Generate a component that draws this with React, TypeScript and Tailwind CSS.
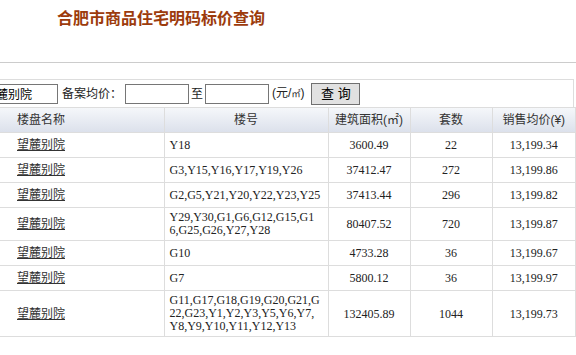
const rows = [
  { no: "Y18", area: "3600.49", sets: "22", price: "13,199.34" },
  { no: "G3,Y15,Y16,Y17,Y19,Y26", area: "37412.47", sets: "272", price: "13,199.86" },
  { no: "G2,G5,Y21,Y20,Y22,Y23,Y25", area: "37413.44", sets: "296", price: "13,199.82" },
  { no: "Y29,Y30,G1,G6,G12,G15,G16,G25,G26,Y27,Y28", area: "80407.52", sets: "720", price: "13,199.87" },
  { no: "G10", area: "4733.28", sets: "36", price: "13,199.67" },
  { no: "G7", area: "5800.12", sets: "36", price: "13,199.97" },
  {
    no: "G11,G17,G18,G19,G20,G21,G22,G23,Y1,Y2,Y3,Y5,Y6,Y7,Y8,Y9,Y10,Y11,Y12,Y13",
    area: "132405.89",
    sets: "1044",
    price: "13,199.73",
  },
];

const cjk = "font-['Liberation_Sans','Noto_Sans_CJK_SC',sans-serif]";
const serif = "font-['Liberation_Serif','Noto_Sans_CJK_SC',serif]";

export default function App() {
  return (
    <div className={`w-[576px] h-[355px] overflow-hidden bg-white ${cjk}`}>
      <h1 className="h-[62px] pl-[57px] pt-[10px] text-[16px] font-bold leading-[18px] text-[#9c3b0c]">
        合肥市商品住宅明码标价查询
      </h1>
      <div className="h-[17px] border-t border-[#cccccc]" />

      <div className="flex h-[28px] w-[574px] items-center border-t border-r border-[#dddddd] text-[12px] text-[#222]">
        <input
          readOnly
          value="望麓别院"
          className="-ml-[19px] h-[20px] w-[77px] border border-[#767676] px-[2px] text-[12px] text-black outline-none"
        />
        <span className="ml-[4px] leading-[14px]">备案均价：</span>
        <input
          readOnly
          className="ml-[3px] h-[20px] w-[64px] border border-[#767676] outline-none"
        />
        <span className="mx-[2px] leading-[14px]">至</span>
        <input
          readOnly
          className="h-[20px] w-[64px] border border-[#767676] outline-none"
        />
        <span className="ml-[3px] leading-[14px]">
          (元/<span className="text-[9px]">㎡</span>)
        </span>
        <button className="ml-[7px] h-[22px] w-[49px] border border-[#707070] bg-[#e1e1e1] text-[13px] leading-[14px] text-black">
          查 询
        </button>
      </div>

      <table className="w-[576px] table-fixed border-collapse text-[12px] text-[#222]">
        <colgroup>
          <col className="w-[164px]" />
          <col className="w-[164px]" />
          <col className="w-[82px]" />
          <col className="w-[82px]" />
          <col />
        </colgroup>
        <thead>
          <tr className="h-[25px] bg-gradient-to-b from-[#f5f7fa] to-[#dbe0eb] text-[#333]">
            <th className="border border-l-0 border-[#dddddd] pl-[17px] text-left font-normal">楼盘名称</th>
            <th className="border border-[#dddddd] font-normal">楼号</th>
            <th className="border border-[#dddddd] font-normal">建筑面积(㎡)</th>
            <th className="border border-[#dddddd] font-normal">套数</th>
            <th className="border border-[#dddddd] font-normal">销售均价(¥)</th>
          </tr>
        </thead>
        <tbody className={serif}>
          {rows.map((r) => (
            <tr key={r.no} className="h-[25px]">
              <td className={`border border-l-0 border-[#dddddd] pl-[17px] ${cjk}`}>
                <a href="#" className="text-[#333] underline">
                  望麓别院
                </a>
              </td>
              <td className="border border-[#dddddd] px-[5px] py-[3px] leading-[13px] break-all">
                {r.no}
              </td>
              <td className="border border-[#dddddd] text-center">{r.area}</td>
              <td className="border border-[#dddddd] text-center">{r.sets}</td>
              <td className="border border-[#dddddd] text-center">{r.price}</td>
            </tr>
          ))}
        </tbody>
      </table>
    </div>
  );
}
